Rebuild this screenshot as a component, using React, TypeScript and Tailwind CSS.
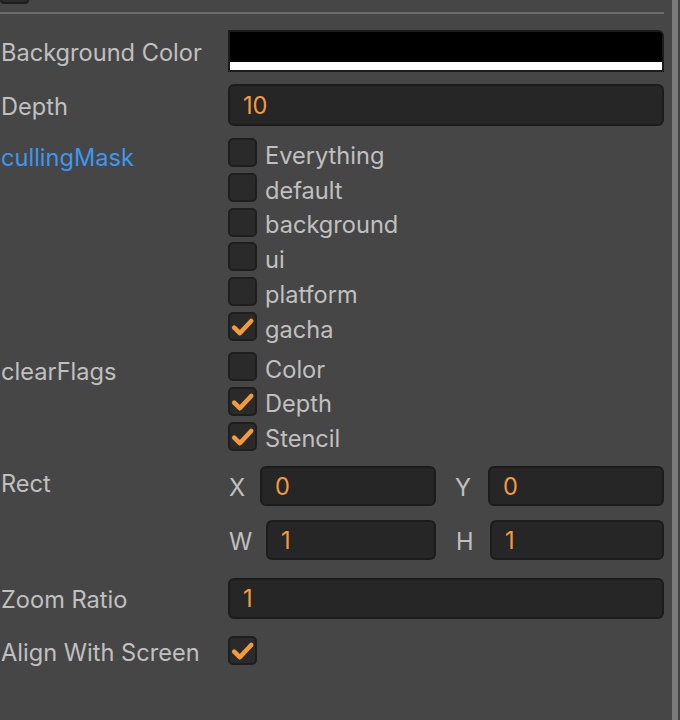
import React from "react";

const Check = () => (
  <svg viewBox="2 2 25 25" className="h-full w-full">
    <path d="M6.2 15.6 L11.8 21.2 L23.2 9" fill="none" stroke="#f29a3d" strokeWidth="4.6" strokeLinecap="round" strokeLinejoin="round" />
  </svg>
);

const Box = ({ checked }: { checked?: boolean }) => (
  <div className="h-[29px] w-[29px] shrink-0 rounded-[5px] border-2 border-[#1e1e1e] bg-[#2a2a2a]">
    {checked ? <Check /> : null}
  </div>
);

const CheckRow = ({ label, checked }: { label: string; checked?: boolean }) => (
  <div className="flex h-[29px] items-center gap-[8px]">
    <Box checked={checked} />
    <span className="pt-[6px] leading-none">{label}</span>
  </div>
);

const Input = ({ value, h = "h-[42px]" }: { value: string; h?: string }) => (
  <div className={`flex ${h} flex-1 items-center rounded-[6px] border-2 border-[#1c1c1c] bg-[#262626] pl-[13px] text-[#f29a3d]`}>
    <span className="pt-[2px] leading-none">{value}</span>
  </div>
);

const Label = ({ children, blue }: { children: React.ReactNode; blue?: boolean }) => (
  <div className={`w-[228px] shrink-0 pl-[1px] ${blue ? "text-[#3e97ee]" : ""}`}>{children}</div>
);

export default function App() {
  return (
    <div
      className="flex h-[720px] w-[680px] overflow-hidden bg-[#464646] text-[23.6px] leading-[29px] text-[#c0c0c0]"
      style={{ fontFamily: "Inter, 'Liberation Sans', sans-serif" }}
    >
      <div className="flex w-[672px] flex-col pr-[8px]">
        <div className="h-[4px] w-[29px] rounded-b-[6px] border-2 border-t-0 border-[#1e1e1e] bg-[#2a2a2a]" />
        <div className="mt-[8px] h-[2px] bg-[#6c6c6c]" />

        {/* Background Color */}
        <div className="mt-[16px] flex h-[42px] items-center">
          <Label>
            <div className="pt-[2px]">Background Color</div>
          </Label>
          <div className="flex h-[42px] flex-1 flex-col overflow-hidden rounded-tr-[6px] border-2 border-[#1c1c1c] bg-black">
            <div className="flex-1 bg-black" />
            <div className="h-[8px] bg-white" />
          </div>
        </div>

        {/* Depth */}
        <div className="mt-[12px] flex items-center">
          <Label>
            <div className="pt-[2px]">Depth</div>
          </Label>
          <Input value="10" />
        </div>

        {/* cullingMask */}
        <div className="mt-[12px] flex">
          <Label blue>
            <div className="flex h-[29px] items-center pt-[10px]">cullingMask</div>
          </Label>
          <div className="flex flex-col gap-[5.8px]">
            <CheckRow label="Everything" />
            <CheckRow label="default" />
            <CheckRow label="background" />
            <CheckRow label="ui" />
            <CheckRow label="platform" />
            <CheckRow label="gacha" checked />
          </div>
        </div>

        {/* clearFlags */}
        <div className="mt-[11px] flex">
          <Label>
            <div className="flex h-[29px] items-center pt-[10px]">clearFlags</div>
          </Label>
          <div className="flex flex-col gap-[5.8px]">
            <CheckRow label="Color" />
            <CheckRow label="Depth" checked />
            <CheckRow label="Stencil" checked />
          </div>
        </div>

        {/* Rect */}
        <div className="mt-[15.5px] flex">
          <Label>
            <div className="flex h-[40px] items-center pb-[6px]">Rect</div>
          </Label>
          <div className="flex flex-1 flex-col gap-[14px]">
            <div className="grid grid-cols-[208px_1fr] gap-[18px]">
              <div className="flex items-center">
                <span className="w-[32px] pl-[1px] pt-[3px]">X</span>
                <Input value="0" h="h-[40px]" />
              </div>
              <div className="flex items-center">
                <span className="w-[34px] pl-[1px] pt-[3px]">Y</span>
                <Input value="0" h="h-[40px]" />
              </div>
            </div>
            <div className="grid grid-cols-[208px_1fr] gap-[18px]">
              <div className="flex items-center">
                <span className="w-[38px] pl-[1px] pt-[3px]">W</span>
                <Input value="1" h="h-[40px]" />
              </div>
              <div className="flex items-center">
                <span className="w-[36px] pl-[2px] pt-[3px]">H</span>
                <Input value="1" h="h-[40px]" />
              </div>
            </div>
          </div>
        </div>

        {/* Zoom Ratio */}
        <div className="mt-[17.5px] flex items-center">
          <Label>
            <div className="pt-[3px]">Zoom Ratio</div>
          </Label>
          <Input value="1" h="h-[41px]" />
        </div>

        {/* Align With Screen */}
        <div className="mt-[16px] flex items-center">
          <Label>
            <div className="pt-[3px]">Align With Screen</div>
          </Label>
          <Box checked />
        </div>
      </div>
      <div className="h-full w-[6px] bg-[#7a7a7a]" />
      <div className="h-full w-[2px] bg-[#424242]" />
    </div>
  );
}
